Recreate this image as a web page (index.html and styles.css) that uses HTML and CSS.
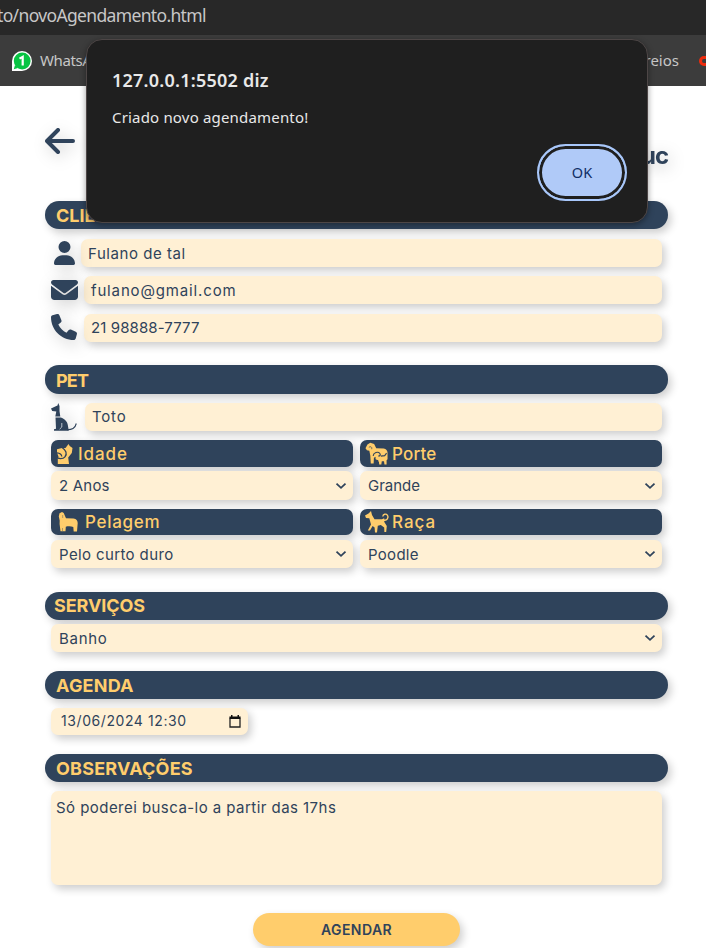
FILE: index.html
```html
<!DOCTYPE html>
<html lang="pt-BR">
<head>
<meta charset="utf-8">
<title>Novo agendamento</title>
<link rel="stylesheet" href="styles.css">
</head>
<body>
<svg class="sprite" aria-hidden="true">
  <symbol id="chevron" viewBox="0 0 12 8"><path d="M1.500 1.700 6 5.800l4.500-4.100" fill="none" stroke="currentColor" stroke-width="1.800"/></symbol>
</svg>
<div class="address"><span>to/novoAgendamento.html</span></div>
<div class="bookmarks">
  <svg class="wa" viewBox="0 0 20 20"><path d="M0 20V10a10 10 0 1 1 10 10z" fill="#fff"/><circle cx="10.200" cy="10" r="8.400" fill="#08c443"/><path d="M3 14 1.800 18.300 6 17z" fill="#08c443"/><path d="M7.500 7.600 10.700 5.800V14.500" fill="none" stroke="#fff" stroke-width="2.200"/></svg>
  <span class="bm-wa">WhatsA</span>
  <span class="bm-co">reios</span>
  <i class="ring"></i>
</div>
<main>
  <header>
    <svg class="back" viewBox="0 0 30 26"><path d="M13 2 2 13l11 11M2.500 13H28" fill="none" stroke="currentColor" stroke-width="4" stroke-linecap="round" stroke-linejoin="round"/></svg>
    <span class="brand">uc</span>
  </header>

  <h2 class="bar"><span class="t-cliente">CLIENTE</span></h2>
  <div class="row r-name">
    <svg class="i-user" viewBox="0 0 448 512"><path fill="currentColor" d="M224 256A128 128 0 1 0 224 0a128 128 0 1 0 0 256zm-45.700 48C79.800 304 0 383.800 0 482.300C0 498.700 13.300 512 29.700 512H418.300c16.400 0 29.700-13.300 29.700-29.700C448 383.800 368.200 304 269.700 304H178.300z"/></svg>
    <div class="field"><span class="t-name">Fulano de tal</span></div>
  </div>
  <div class="row r-mail">
    <svg class="i-mail" viewBox="0 64 512 384" preserveAspectRatio="none"><path fill="currentColor" d="M48 64C21.500 64 0 85.500 0 112c0 15.100 7.100 29.300 19.200 38.400L236.800 313.600c11.400 8.500 27 8.500 38.400 0L492.800 150.400c12.100-9.100 19.200-23.300 19.200-38.400c0-26.500-21.500-48-48-48H48zM0 176V384c0 35.300 28.700 64 64 64H448c35.300 0 64-28.700 64-64V176L294.400 339.200c-22.800 17.100-54 17.100-76.800 0L0 176z"/></svg>
    <div class="field"><span class="t-mail">fulano@gmail.com</span></div>
  </div>
  <div class="row r-phone">
    <svg class="i-phone" viewBox="0 0 512 512"><path fill="currentColor" d="M164.900 24.600c-7.700-18.600-28-28.500-47.400-23.200l-88 24C12.100 30.200 0 46 0 64C0 311.400 200.600 512 448 512c18 0 33.800-12.100 38.600-29.500l24-88c5.300-19.400-4.600-39.700-23.200-47.400l-96-40c-16.300-6.800-35.200-2.100-46.300 11.600L304.700 368C234.300 334.700 177.300 277.700 144 207.300L193.300 167c13.700-11.200 18.400-30 11.600-46.300l-40-96z"/></svg>
    <div class="field"><span class="t-phone">21 98888-7777</span></div>
  </div>

  <h2 class="bar b-pet"><span class="t-pet">PET</span></h2>
  <div class="row r-pet">
    <svg class="i-dog" viewBox="0 0 26 28"><path fill="currentColor" d="M4.800 3.200 6.500 2.500 7.200 0 8.500 3V8L9.300 13.400H4.300L5.300 8.400 1.200 8 0 5.500ZM4.500 14.600H9.800C13.500 16 16.500 18.500 16.800 22L17.800 27.700H3V26.300L5 25.800Z"/><path d="M16 26.700c5 0 8-1 9.300-6.200" fill="none" stroke="currentColor" stroke-width="1.100"/><path d="M10.800 20v4L8.600 26.200" fill="none" stroke="#dfe3e8" stroke-width=".8"/></svg>
    <div class="field"><span class="t-toto">Toto</span></div>
  </div>

  <div class="grid">
    <div>
      <h3 class="label"><svg class="i-age" viewBox="0 0 16 20"><path fill="currentColor" d="M0 5.200 5 4H8.500L11.500 0l1.200 2 2.800 2L14.800 9l-3.600 4.500L12 20H.8V14.500L1.600 13 0 8.500Z"/><path d="M5 3.500C9 6 10.500 10 8 12.800 6.500 14.600 4 15 .5 14.200M0 8.800c3 .2 4.500 1.500 4.800 3.700" fill="none" stroke="#2f435b" stroke-width="1.300"/></svg><span class="t-idade">Idade</span></h3>
      <div class="select"><span class="t-anos">2 Anos</span><svg class="chev"><use href="#chevron"/></svg></div>
    </div>
    <div>
      <h3 class="label"><svg class="i-size" viewBox="0 0 24 24"><path fill="currentColor" d="M0 6.500 2 2.500 5 .8 9 2l2.200 4.500L19 6.800c2.500.4 4 2 4 4.500V18L22 19v4.500h-2.200L19.300 20H17l-.5 3.500h-2.200L14 20.500 12 19l-1.500-.5V15.500L8.800 16.500 8.500 22.500H5.500L5 14 4 9 1.500 8.500Z"/><path d="M8 14.500c.3-3.500 5-5 7-2.500 1 1.500 0 3-1.700 2.500M9.800 18.500l3.500 1.200M16 14.700l4-.5 2-2.500" fill="none" stroke="#2f435b" stroke-width="1.200"/><path d="M3.500 5.500C5 4.300 7.300 5 6.500 7.500" fill="none" stroke="#2f435b" stroke-width=".7"/></svg><span class="t-porte">Porte</span></h3>
      <div class="select"><span class="t-grande">Grande</span><svg class="chev"><use href="#chevron"/></svg></div>
    </div>
    <div>
      <h3 class="label l2"><svg class="i-coat" viewBox="0 0 20 20"><path fill="currentColor" d="M.8 4.500 1.500 1.300 4 0l1.700 1L7 4l1 2.200 7.500.3c3 .5 4 2 4.200 4.500L19 19.500h-3.300l-.4-4.500c-2-1-4-1-6-.7l-1.500.5-.3 4.400H2.500L1.600 12 1.700 8.500Z"/><path d="M4.700 3v3M4.500 16v3" fill="none" stroke="#2f435b" stroke-width=".4"/></svg><span class="t-pelagem">Pelagem</span></h3>
      <div class="select s2"><span class="t-pelo">Pelo curto duro</span><svg class="chev"><use href="#chevron"/></svg></div>
    </div>
    <div>
      <h3 class="label l2"><svg class="i-breed" viewBox="0 0 24 22"><path fill="currentColor" d="M0 4.500 3.500 2.500 6 0 7 4l2.500 4.200H17L19.200 7.200 19.300 11l2.500 4-.6 6h-1.800l-.2-4.500L15.800 14l-3 .8L12 21.500H10l-.4-5-2-1.500L5 19.500H2.800L6 13.500 4.300 7.300 1 7Z"/><path d="M18.500 9c3.500 1 5.500-2.500 4-4.700C21 2.300 18 3 17.800 5.500" fill="none" stroke="currentColor" stroke-width="1.400"/></svg><span class="t-raca">Raça</span></h3>
      <div class="select s2"><span class="t-poodle">Poodle</span><svg class="chev"><use href="#chevron"/></svg></div>
    </div>
  </div>

  <h2 class="bar b-serv"><span class="t-serv">SERVIÇOS</span></h2>
  <div class="select serv"><span class="t-banho">Banho</span><svg class="chev"><use href="#chevron"/></svg></div>

  <h2 class="bar b-agenda"><span class="t-agenda">AGENDA</span></h2>
  <div class="date"><span class="t-date">13/06/2024 12:30</span>
    <svg viewBox="0 0 12 13"><path d="M1 3.500V12h10V3.500" fill="none" stroke="#222" stroke-width="1.300"/><path fill="#111" d="M.4 1.500H2V0h1.500v1.500h5V0H10v1.500h1.600v2.500H.4z"/></svg></div>

  <h2 class="bar b-obs"><span class="t-obs">OBSERVAÇÕES</span></h2>
  <div class="notes"><span class="t-notes">Só poderei busca-lo a partir das 17hs</span></div>
  <div class="submit"><span class="t-submit">AGENDAR</span></div>
</main>

<div class="dialog">
  <h1><span class="t-title">127.0.0.1:5502 diz</span></h1>
  <p><span class="t-msg">Criado novo agendamento!</span></p>
  <div class="ok"><span>OK</span></div>
</div>
</body>
</html>
```
FILE: styles.css
```css
* { box-sizing: border-box; }
body {
  margin: 0;
  width: 706px;
  height: 948px;
  overflow: hidden;
  position: relative;
  background: #fff;
  color: #2f435b;
  font: 15px/30px Inter, "Liberation Sans", sans-serif;
}
h1, h2, h3, p { margin: 0; }
span { white-space: nowrap; }
svg { display: block; flex: none; overflow: visible; }
.sprite { width: 0; height: 0; position: absolute; }

.address {
  height: 35px;
  background: #282828;
  color: #c7c7c7;
  font: 17.500px/30px "Noto Sans", sans-serif;
}
.address span { margin-left: -3px; letter-spacing: -0.65px; }
.bookmarks {
  height: 51px;
  padding-left: 12px;
  display: flex;
  align-items: center;
  background: #3c3c3c;
  color: #c7c7c7;
  font: 15px/20px "Noto Sans", sans-serif;
}
.wa { width: 20px; height: 20px; margin-right: 8px; }
.bm-wa { letter-spacing: -0.4px; }
.bm-wa, .bm-co { margin-top: -1px; }
.bm-co { margin-left: auto; }
.ring {
  width: 12px;
  height: 10px;
  margin: 0 -5px 0 20px;
  border: 3px solid #ee2b0c;
  border-radius: 5px;
}

main { padding: 0 38px 0 45px; }
header { height: 115px; display: flex; justify-content: space-between; }
.back { width: 30px; height: 26px; margin-top: 42px; }
.back, .brand, .row > svg { filter: drop-shadow(3px 4px 8px rgba(0, 0, 0, .2)); }
.brand { margin-top: 55px; font-size: 24px; font-weight: 700; letter-spacing: -1px; }

.bar, .field, .label, .select, .date, .notes, .submit {
  box-shadow: 3px 4px 8px rgba(0, 0, 0, .2);
}
.bar {
  height: 28px;
  padding-left: 11px;
  border-radius: 14px;
  background: #2f435b;
  color: #ffcd6c;
  font-size: 18px;
  font-weight: 700;
  line-height: 29px;
}
.row { display: flex; align-items: center; height: 28px; padding: 0 6px; }
.field { flex: 1; height: 28px; padding-left: 7px; border-radius: 7px; background: #fff0d4; }
.r-name { margin-top: 10px; }
.r-mail { margin-top: 9px; }
.r-phone { margin-top: 10px; }
.r-phone .field, .r-pet .field { line-height: 28px; }
.i-user { width: 21px; height: 24px; margin: 0 6px 0 3px; }
.i-mail { width: 27px; height: 20px; margin-right: 6px; }
.i-phone { width: 26px; height: 26px; margin: -2px 7px 0 0; }
.b-pet { height: 29px; margin-top: 23px; line-height: 31px; }
.r-pet { margin-top: 9px; }
.i-dog { width: 26px; height: 28px; margin-right: 8px; }

.grid {
  display: grid;
  grid-template-columns: 302px 302px;
  gap: 9px 7px;
  margin: 9px 6px 0;
}
.label {
  display: flex;
  align-items: center;
  height: 27px;
  padding-left: 5px;
  border-radius: 7px;
  background: #2f435b;
  color: #ffcd6c;
  font-size: 17px;
  font-weight: 500;
}
.l2 { height: 26px; }
.i-age { width: 16px; height: 20px; margin: 0 5px 0 1px; }
.i-size { width: 24px; height: 23px; margin-right: 3px; }
.i-coat { width: 20px; height: 20px; margin: 0 7px 0 2px; }
.i-breed { width: 24px; height: 22px; margin-right: 3px; }
.select {
  display: flex;
  align-items: center;
  justify-content: space-between;
  height: 29px;
  margin-top: 4px;
  padding: 0 6px 0 8px;
  border-radius: 7px;
  background: #fff0d4;
}
.s2 { height: 28px; margin-top: 5px; }
.s2 span, .serv span { margin-top: 1px; }
.chev { width: 12px; height: 8px; }
.b-serv { margin-top: 24px; padding-left: 9px; line-height: 27px; }
.serv { height: 28px; margin: 4px 6px 0; }
.b-agenda { margin-top: 19px; }
.date {
  display: flex;
  align-items: center;
  justify-content: space-between;
  width: 197px;
  height: 27px;
  margin: 9px 0 0 6px;
  padding: 0 7px 1px 10px;
  border-radius: 7px;
  background: #fff0d4;
  font-size: 14px;
}
.date svg { width: 12px; height: 13px; margin-top: 1px; }
.b-obs { margin-top: 19px; }
.notes {
  height: 94px;
  margin: 9px 6px 0;
  padding: 2px 5px;
  border-radius: 7px;
  background: #fff0d4;
}
.submit {
  width: 207px;
  height: 33px;
  margin: 28px auto 0 208px;
  border-radius: 17px;
  background: #ffcd6c;
  text-align: center;
  font-size: 14px;
  font-weight: 600;
  line-height: 34px;
}

.t-name { letter-spacing: .55px; }
.t-mail { letter-spacing: .85px; }
.t-phone { letter-spacing: .1px; }
.t-toto { letter-spacing: .8px; }
.t-pet { letter-spacing: -.8px; }
.t-idade { letter-spacing: .9px; }
.t-pelagem { letter-spacing: .7px; }
.t-porte { letter-spacing: .2px; }
.t-raca { letter-spacing: 1px; }
.t-anos { letter-spacing: .2px; }
.t-pelo { letter-spacing: .38px; }
.t-poodle { letter-spacing: .3px; }
.t-serv { letter-spacing: -.1px; }
.t-agenda { letter-spacing: .2px; }
.t-obs { letter-spacing: .2px; }
.t-banho { letter-spacing: .7px; }
.t-date { letter-spacing: .58px; }
.t-notes { letter-spacing: .45px; }
.t-submit { letter-spacing: .45px; }
.t-title { letter-spacing: .23px; }
.t-msg { letter-spacing: .18px; }

.dialog {
  position: absolute;
  left: 86px;
  top: 39px;
  width: 562px;
  height: 184px;
  padding: 27px 20px 0 25px;
  border: 1px solid #4d4646;
  border-radius: 16px;
  background: #1f1f1f;
  color: #e8e8e8;
  box-shadow: 0 2px 6px rgba(0, 0, 0, .4);
  font: 15px/20px "Noto Sans", sans-serif;
}
.dialog h1 { font-size: 18px; font-weight: 600; line-height: 26px; }
.dialog p { margin-top: 14px; }
.ok {
  width: 90px;
  height: 57px;
  margin: 17px 0 0 auto;
  border: 2px solid #a8c7fa;
  border-radius: 29px;
  background: #b0caf8;
  box-shadow: inset 0 0 0 3px #1f1f1f;
  color: #102e66;
  text-align: center;
  font-size: 14.500px;
  line-height: 53px;
}
```
